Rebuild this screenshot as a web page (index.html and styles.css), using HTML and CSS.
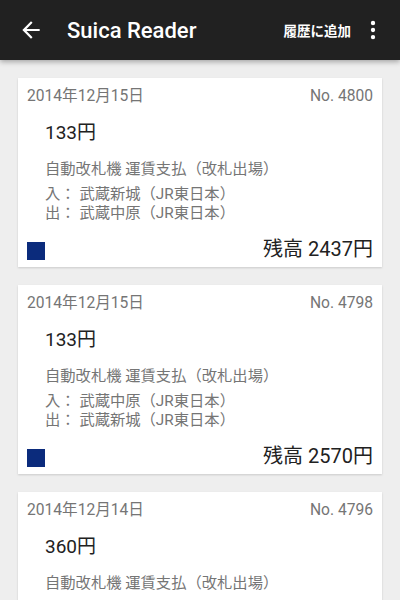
FILE: index.html
```html
<!doctype html>
<html>
<head>
	<title>Suica Reader</title>
	<meta charset="utf-8">
	<link rel="stylesheet" href="styles.css">
</head>
<body>
	<div class="appbar">
		<svg class="icon back" viewBox="0 0 24 24" width="26" height="26"><path d="M20 11H7.83l5.59-5.59L12 4l-8 8 8 8 1.41-1.41L7.83 13H20v-2z" fill="#fff"/></svg>
		<div class="title">Suica Reader</div>
		<div class="action">履歴に追加</div>
		<svg class="icon more" viewBox="0 0 24 24" width="26" height="26"><circle cx="12" cy="5.5" r="2" fill="#fff"/><circle cx="12" cy="12" r="2" fill="#fff"/><circle cx="12" cy="18.5" r="2" fill="#fff"/></svg>
	</div>

	<div class="list">
		<div class="card">
			<div class="head"><span>2014年12月15日</span><span>No. 4800</span></div>
			<div class="body">
				<div class="amount">133円</div>
				<div class="desc">自動改札機 運賃支払（改札出場）</div>
				<div class="station">入： 武蔵新城（JR東日本）</div>
				<div class="station">出： 武蔵中原（JR東日本）</div>
			</div>
			<div class="foot"><span class="mark"></span><span class="balance">残高 2437円</span></div>
		</div>

		<div class="card">
			<div class="head"><span>2014年12月15日</span><span>No. 4798</span></div>
			<div class="body">
				<div class="amount">133円</div>
				<div class="desc">自動改札機 運賃支払（改札出場）</div>
				<div class="station">入： 武蔵中原（JR東日本）</div>
				<div class="station">出： 武蔵新城（JR東日本）</div>
			</div>
			<div class="foot"><span class="mark"></span><span class="balance">残高 2570円</span></div>
		</div>

		<!-- last card runs off the bottom of the screen -->
		<div class="card partial">
			<div class="head"><span>2014年12月14日</span><span>No. 4796</span></div>
			<div class="body">
				<div class="amount">360円</div>
				<div class="desc">自動改札機 運賃支払（改札出場）</div>
			</div>
		</div>
	</div>
</body>
</html>
```

FILE: styles.css
```css
	html, body {
		margin: 0;
		padding: 0;
	}
	body {
		height: 600px;
		background: #eeeeee;
		font-family: Roboto, "Noto Sans CJK JP", sans-serif;
		overflow: hidden;
	}
	.appbar {
		position: relative;
		z-index: 1;
		display: flex;
		align-items: center;
		height: 60px;
		padding: 0 14px 0 18px;
		background: #212121;
		color: #fff;
		box-shadow: 0 2px 5px rgba(0, 0, 0, 0.3);
	}
	.icon {
		display: block;
		flex: none;
	}
	.title {
		margin-left: 23px;
		font-size: 22px;
		font-weight: 500;
		flex: 1;
	}
	.action {
		font-size: 13.5px;
		font-weight: 700;
		margin-right: 9px;
	}
	.list {
		padding: 18px 18px 0 18px;
		display: flex;
		flex-direction: column;
		gap: 18px;
	}
	.card {
		background: #fff;
		padding: 8px 9px 6px 9px;
		box-shadow: 0 1px 2px rgba(0, 0, 0, 0.15);
	}
	.card.partial {
		padding-bottom: 40px;
	}
	.head {
		display: flex;
		justify-content: space-between;
		font-size: 15.6px;
		line-height: 20px;
		color: #757575;
	}
	.body {
		padding-left: 18px;
	}
	.amount {
		margin-top: 15px;
		font-size: 19px;
		line-height: 24px;
		color: #212121;
	}
	.desc {
		margin-top: 14px;
		margin-bottom: 6px;
		font-size: 15.3px;
		line-height: 20px;
		color: #757575;
	}
	.station {
		font-size: 15.3px;
		line-height: 19px;
		color: #757575;
	}
	.foot {
		display: flex;
		justify-content: space-between;
		align-items: center;
		margin-top: 14px;
		height: 24px;
	}
	.mark {
		width: 18px;
		height: 18px;
		margin-top: 3px;
		background: #0b2b7c;
	}
	.balance {
		font-size: 20px;
		line-height: 24px;
		color: #212121;
	}
```
